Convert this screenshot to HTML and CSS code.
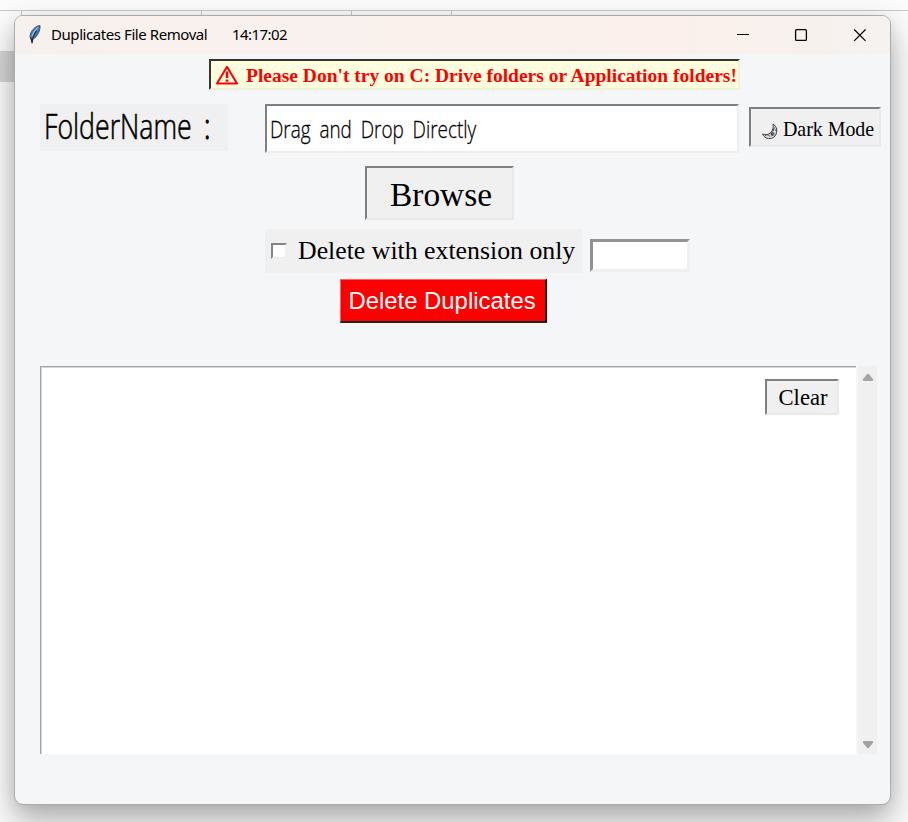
FILE: index.html
```html
<!DOCTYPE html>
<html lang="en">
<head>
<meta charset="utf-8">
<title>Duplicates File Removal</title>
<link rel="stylesheet" href="styles.css">
</head>
<body>
<div class="backdrop"><i class="rule"></i><i class="tick t1"></i><i class="tick t2"></i><i class="tick t3"></i><i class="tick t4"></i><i class="selected"></i></div>
<main class="window">
  <header class="titlebar">
    <svg class="feather" width="14" height="21" viewBox="0 0 14 21"><path d="M12 1.500C7.500 2 3 6.500 2.200 11c-.4 2 .2 4 1.200 4.800C8 14.500 12.500 8 12 1.500Z" fill="#3c78c0" stroke="#4b5158" stroke-width="1"/><path d="M8.500 6C6 10 4.600 13 4 19.500M3 14l1 5" fill="none" stroke="#22262e" stroke-width="1.100"/><path d="M10 3.500C7 6 5.200 9 4 12" fill="none" stroke="#8fc0ed" stroke-width="1.400"/></svg>
    <span class="title">Duplicates File Removal</span>
    <span class="clock">14:17:02</span>
    <svg class="controls" width="131" height="14" viewBox="0 0 131 14" fill="none" stroke="#000"><path d="M0 6.500h12" stroke-width="1.200"/><rect x="58.600" y="1.600" width="10.800" height="10.800" rx="1" stroke-width="1.300"/><path d="M117.200 1.500l11.300 11.300M128.500 1.500l-11.300 11.300" stroke-width="1.200"/></svg>
  </header>
  <section class="content">
    <div class="warning">
      <svg width="24" height="21" viewBox="0 0 24 21" fill="none" stroke="red"><path d="M12 1.800L22 18.600H2Z" stroke-width="2" stroke-linejoin="round"/><path d="M12 6.500v6.500M12 14.500v2.200" stroke-width="2.600"/></svg>
      <span>Please Don't try on C: Drive folders or Application folders!</span>
    </div>
    <div class="folder-row">
      <div class="label"><span class="name">FolderName</span><span class="colon">:</span></div>
      <div class="entry"><span>Drag and Drop Directly</span></div>
      <button class="sunken dark">
        <svg width="18" height="18" viewBox="0 0 18 18" fill="#d9d9df" stroke="#3c3c44" stroke-width="1"><path d="M12 1c4 2 5 8 2 12-3.500 4-10 3.500-12.500-2 3 1.300 6 .8 8-1.200C12 7.200 12.700 4 12 1Z"/><path d="M4 12.200l3-.6 2 2M13.300 4.500l-1.500 4M15 6v2"/><circle cx="11.500" cy="11" r="1.500"/><circle cx="11" cy="11" r=".6" fill="#222"/></svg>
        <span>Dark Mode</span>
      </button>
    </div>
    <button class="sunken browse">Browse</button>
    <div class="extension-row">
      <label class="check"><i class="box"></i><span>Delete with extension only</span></label>
      <div class="ext-entry"></div>
    </div>
    <button class="delete">Delete Duplicates</button>
    <div class="log-row">
      <div class="log"><button class="sunken clear">Clear</button></div>
      <div class="scrollbar">
        <svg width="12" height="9" viewBox="0 0 12 9"><path d="M5 1.200q1-1 2 0l4 5q.8 1.800-1 1.800H2Q.2 8 1 6.200Z" fill="#a3a3a3"/></svg>
        <svg width="12" height="9" viewBox="0 0 12 9"><path d="M5 7.800q1 1 2 0l4-5Q11.800 1 10 1H2Q.2 1 1 2.800Z" fill="#a3a3a3"/></svg>
      </div>
    </div>
  </section>
</main>
</body>
</html>
```
FILE: styles.css
```css
* { box-sizing: border-box; }
body { margin: 0; width: 908px; height: 822px; overflow: hidden; position: relative; background: #fbfbfb; font-family: "Liberation Serif", serif; color: #000; }
i { display: block; }
button { padding: 0; margin: 0; border-radius: 0; font-family: inherit; color: #000; }
svg { display: block; flex: none; }

.backdrop { position: absolute; inset: 0; }
.rule { position: absolute; top: 10px; left: 0; width: 100%; height: 1px; background: #c8c8c8; }
.tick { position: absolute; top: 11px; width: 1px; height: 5px; background: #c8c8c8; }
.t1 { left: 21px; }
.t2 { left: 201px; }
.t3 { left: 351px; }
.t4 { left: 451px; }
.selected { position: absolute; top: 51px; left: 0; width: 16px; height: 31px; background: #d5d5d5; }

.window { position: relative; width: 877px; height: 790px; margin: 15px 0 0 14px; border: 1px solid #aaabad; border-radius: 9px; overflow: hidden; background: #f4f6f8; box-shadow: 0 16px 32px rgba(0,0,0,.3), 0 2px 16px rgba(0,0,0,.08); }
.titlebar { height: 38px; display: flex; align-items: center; padding-left: 13px; background: linear-gradient(90deg, #f7f1ed, #f9f1ed 35%, #fbf0eb 75%, #f5f2ef); font-family: "Noto Sans", sans-serif; font-size: 15px; }
.feather { margin-top: -2px; }
.title, .clock { flex: none; white-space: nowrap; margin-top: -2px; }
.title { width: 190px; padding-left: 9px; letter-spacing: -.43px; }
.clock { width: 505px; letter-spacing: -.57px; }

.content { display: flex; flex-direction: column; align-items: flex-start; padding-top: 5px; }
.warning { display: flex; align-items: center; width: 531px; height: 31px; margin-left: 194px; padding-left: 4px; background: #ffffdf; border: 2px solid; border-color: #35352b #f0f0d4 #f0f0d4 #35352b; color: red; font-weight: 700; font-size: 19.500px; white-space: nowrap; }
.warning span { margin: 2px 0 0 7px; }
.warning svg { margin-top: 2px; }

.folder-row { display: flex; margin: 14px 0 0 25px; height: 49px; }
.label { width: 188px; height: 47px; background: #f0f0f0; display: flex; font-family: "Open Sans", sans-serif; font-weight: 300; font-size: 34px; line-height: 45px; padding-left: 4px; -webkit-text-stroke: .6px #000; }
.name { width: 160px; white-space: nowrap; }
.name, .colon { display: block; transform-origin: left; transform: scaleX(.785); }
.colon { -webkit-text-stroke: 1.200px #000; }
.entry { width: 474px; height: 49px; margin-left: 37px; background: #fff; border: 2px solid; border-color: #808080 #eee #eee #808080; padding-left: 3px; font-family: "Open Sans", sans-serif; font-weight: 300; font-size: 24px; line-height: 45px; white-space: nowrap; -webkit-text-stroke: .3px #000; }
.entry span { display: inline-block; word-spacing: 5px; transform-origin: left; transform: scaleX(.788); }
.sunken { background: #f0f0f0; border: 2px solid; border-color: #808080 #e9e9e9 #e9e9e9 #808080; }
.dark { display: flex; align-items: center; width: 132px; height: 40px; margin: 3px 0 0 10px; padding-left: 10px; font-size: 19.900px; white-space: nowrap; }
.dark span { margin: 4px 0 0 4px; }
.dark svg { margin-top: 10px; }
.browse { width: 149px; height: 54px; margin: 13px 0 0 350px; padding: 3px 0 0 3px; font-size: 33.400px; }

.extension-row { display: flex; margin: 9px 0 0 250px; }
.check { display: flex; align-items: center; width: 317px; height: 44px; background: #f0f0f0; padding-left: 6px; font-size: 25.800px; white-space: nowrap; }
.box { width: 16px; height: 16px; background: #fff; border: 2px solid; border-color: #858585 #eee #eee #858585; margin: 0 11px 0 0; }
.ext-entry { width: 100px; height: 33px; margin: 10px 0 0 8px; background: #fff; border: 3px solid; border-color: #929292 #f0f0f0 #f0f0f0 #929292; }
.delete { width: 207px; height: 44px; margin: 6px 0 0 325px; padding-right: 2px; border: 2px solid; border-color: #ff5f5f #300 #222 #ff5f5f; border-top-width: 1px; border-left-width: 1px; background: red; color: #fff; font-family: "Liberation Sans", sans-serif; font-size: 23.900px; white-space: nowrap; }

.log-row { display: flex; margin: 43px 0 0 25px; height: 388px; gap: 2px; }
.log { width: 816px; background: #fff; border-top: 1px solid #a2a2a2; border-left: 1px solid #a2a2a2; box-shadow: inset 1px 1px #d6d6d6; display: flex; justify-content: flex-end; align-items: flex-start; padding: 12px 17px 0 0; }
.clear { width: 74px; height: 36px; padding: 2px 0 0 2px; font-size: 22.600px; }
.scrollbar { width: 19px; background: #f0f0f0; display: flex; flex-direction: column; justify-content: space-between; align-items: center; padding: 7px 0 5px; }
```
